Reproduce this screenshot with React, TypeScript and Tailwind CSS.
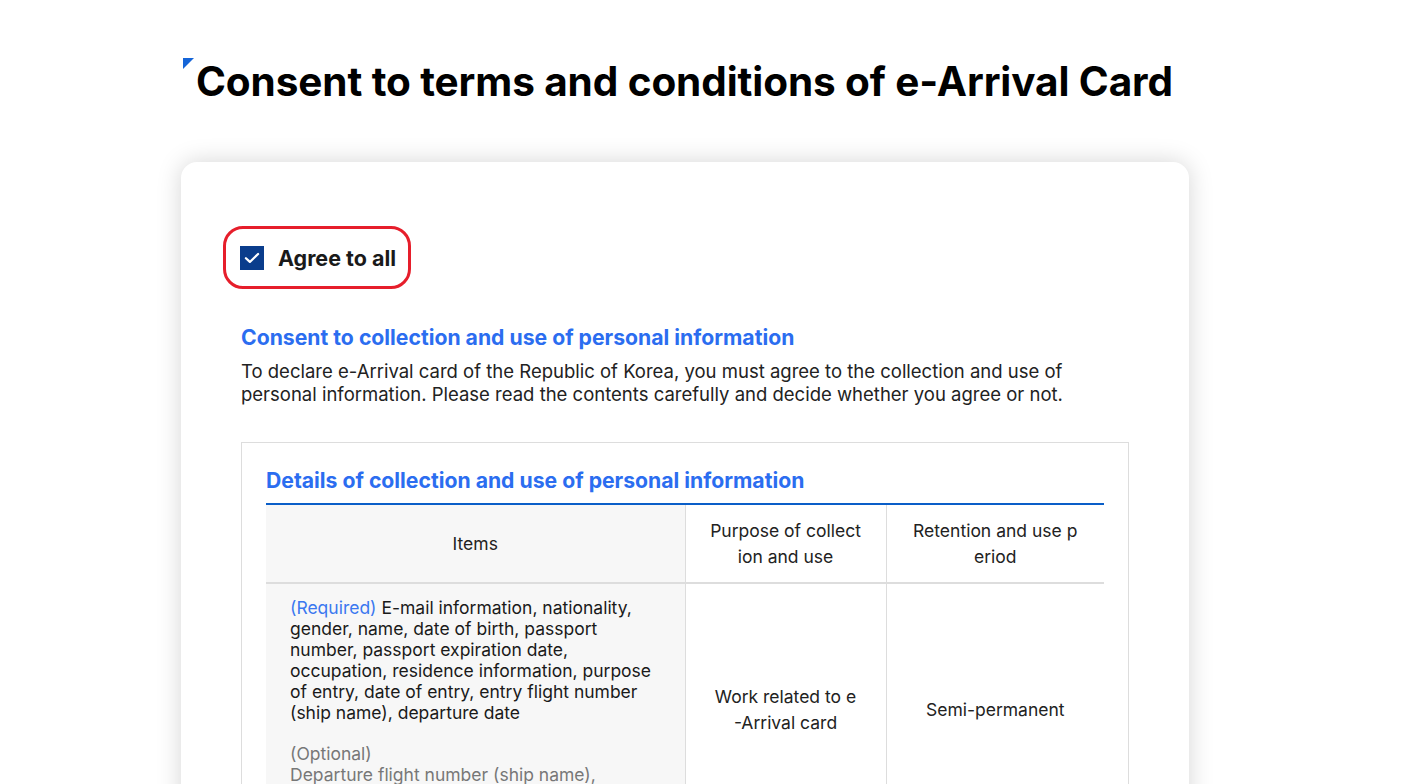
import React from "react";

export default function App() {
  const font = { fontFamily: "Inter, 'Noto Sans', sans-serif" };
  return (
    <div className="min-h-screen bg-white text-[#111]" style={font}>
      <div className="ml-[181px] w-[1008px] pt-[58px]">
        <div className="relative pl-[15px]">
          <span className="absolute left-[2px] top-0 w-0 h-0 border-t-[11px] border-t-[#1565d8] border-r-[11px] border-r-transparent"></span>
          <h1 className="text-[40.5px] leading-[48px] font-bold tracking-[-0.1px] text-black whitespace-nowrap">
            Consent to terms and conditions of e-Arrival Card
          </h1>
        </div>

        <div className="mt-[56px] bg-white rounded-[16px] shadow-[0_0_24px_rgba(0,0,0,0.17)] px-[60px] pt-[64px] pb-[60px]">
          <div className="inline-flex items-center gap-[14px] border-[3px] border-[#e61e2b] rounded-[20px] pl-[14px] pr-[12px] h-[63px] -ml-[18px]">
            <span className="w-[24px] h-[24px] bg-[#0a3d8c] flex items-center justify-center">
              <svg width="18" height="18" viewBox="0 0 16 16" fill="none">
                <path d="M2.6 8.2l3.5 3.3L13.4 4.4" stroke="white" strokeWidth="2" strokeLinecap="round" strokeLinejoin="round" />
              </svg>
            </span>
            <span className="text-[21.5px] font-bold text-[#1a1a1a] leading-none pt-[3px]">Agree to all</span>
          </div>

          <h2 className="mt-[34px] text-[21.2px] leading-[28px] font-bold text-[#2b6df0]">
            Consent to collection and use of personal information
          </h2>
          <p className="mt-[9px] text-[18.5px] leading-[23px] text-[#222] w-[840px]">
            To declare e-Arrival card of the Republic of Korea, you must agree to the collection and use of personal information. Please read the contents carefully and decide whether you agree or not.
          </p>

          <div className="mt-[36px] border border-[#dddddd] px-[24px] pt-[23px] pb-[24px]">
            <h3 className="text-[21.2px] leading-[28px] font-bold text-[#2b6df0]">
              Details of collection and use of personal information
            </h3>
            <table className="mt-[9px] w-full border-collapse border-t-2 border-t-[#0a5ec8] table-fixed">
              <colgroup>
                <col className="w-[419px]" />
                <col className="w-[201px]" />
                <col className="w-[218px]" />
              </colgroup>
              <thead>
                <tr className="border-b-2 border-b-[#dddddd]">
                  <th className="bg-[#f7f7f7] font-normal text-[17.5px] leading-[26px] text-[#222] px-[24px] h-[79px] border-r border-r-[#dddddd]">
                    Items
                  </th>
                  <th className="font-normal text-[17.5px] leading-[26px] text-[#222] px-[12px] h-[79px] border-r border-r-[#dddddd] whitespace-nowrap">
                    Purpose of collect
                    <br />
                    ion and use
                  </th>
                  <th className="font-normal text-[17.5px] leading-[26px] text-[#222] px-[12px] h-[79px] whitespace-nowrap">
                    Retention and use p
                    <br />
                    eriod
                  </th>
                </tr>
              </thead>
              <tbody>
                <tr>
                  <td className="bg-[#f7f7f7] align-top pl-[24px] pr-[24px] pt-[13px] pb-[30px] text-[17.5px] leading-[21px] text-[#1a1a1a] border-r border-r-[#dddddd]">
                    <p>
                      <span className="text-[#3b78f0]">(Required)</span> E-mail information, nationality, gender, name, date of birth, passport number, passport expiration date, occupation, residence information, purpose of entry, date of entry, entry flight number (ship name), departure date
                    </p>
                    <p className="mt-[20px] text-[#777]">(Optional)</p>
                    <p className="text-[#777]">Departure flight number (ship name), departure destination</p>
                  </td>
                  <td className="align-middle text-center px-[12px] text-[17.5px] leading-[26px] text-[#222] border-r border-r-[#dddddd] whitespace-nowrap">
                    Work related to e
                    <br />
                    -Arrival card
                  </td>
                  <td className="align-middle text-center px-[12px] text-[17.5px] leading-[26px] text-[#222]">
                    Semi-permanent
                  </td>
                </tr>
              </tbody>
            </table>
          </div>
        </div>
      </div>
    </div>
  );
}
